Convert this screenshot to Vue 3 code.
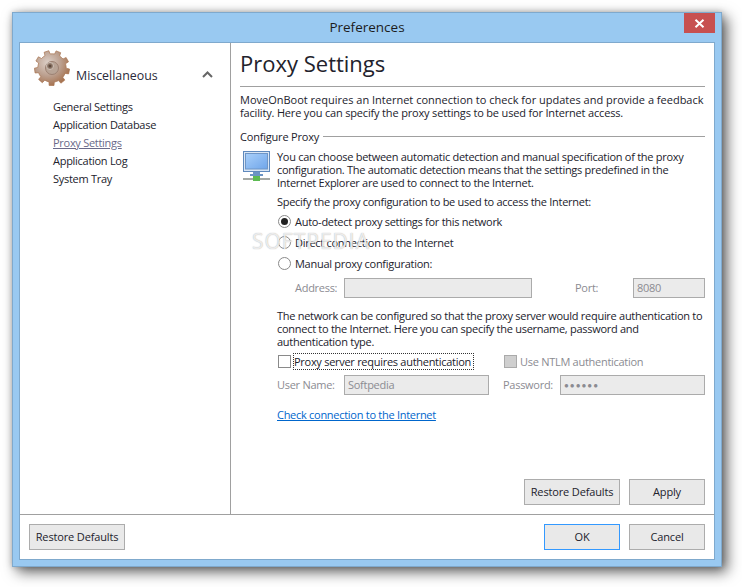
<script setup>
const nav = [
  { label: 'General Settings' },
  { label: 'Application Database' },
  { label: 'Proxy Settings', active: true },
  { label: 'Application Log' },
  { label: 'System Tray' }
]
const radios = [
  { label: 'Auto-detect proxy settings for this network', on: true },
  { label: 'Direct connection to the Internet' },
  { label: 'Manual proxy configuration:' }
]
function gearPath() {
  const cx = 18, cy = 19, teeth = 9
  const pts = []
  for (let i = 0; i < teeth; i++) {
    const a = (i / teeth) * Math.PI * 2 + 0.2
    const s = (Math.PI * 2) / teeth
    const list = [[14.2, -0.5], [14.2, -0.27], [17.6, -0.2], [17.6, 0.2], [14.2, 0.27], [14.2, 0.5]]
    for (const [r, f] of list) {
      const t = a + f * s
      pts.push((cx + r * Math.cos(t)).toFixed(1) + ' ' + (cy + r * Math.sin(t)).toFixed(1))
    }
  }
  return 'M' + pts.join('L') + 'Z'
}
const gear = gearPath()
</script>

<template>
  <div class="page">
    <div class="window">
      <header class="titlebar">
        <span class="title">Preferences</span>
        <button class="close" aria-label="Close">
          <svg width="11" height="9" viewBox="0 0 11 9"><path d="M1.500 .8 9.500 8.200M9.500 .8 1.500 8.200" stroke="#fff" stroke-width="2" fill="none"/></svg>
        </button>
      </header>
      <div class="client">
        <div class="main">
          <aside class="side">
            <div class="side-head">
              <svg class="gear" width="36" height="38" viewBox="0 0 36 38">
                <defs>
                  <radialGradient id="gearFill" cx="38%" cy="35%" r="75%">
                    <stop offset="0" stop-color="#ddd0c8"/>
                    <stop offset=".5" stop-color="#bb9f8e"/>
                    <stop offset="1" stop-color="#a0663f"/>
                  </radialGradient>
                </defs>
                <path :d="gear" fill="url(#gearFill)" stroke="#a8734f" stroke-width=".7"/>
                <circle cx="18" cy="19" r="6.500" fill="#b8a496" stroke="#9c8172"/>
                <circle cx="16" cy="17" r="3.500" fill="#8e7768" stroke="#cfc2b9"/>
                <circle cx="16" cy="17" r="1.500" fill="#5d4a3e"/>
              </svg>
              <span class="side-title">Miscellaneous</span>
              <svg class="chev" width="11" height="7" viewBox="0 0 11 7"><path d="M1 6 5.500 1.500 10 6" fill="none" stroke="#666" stroke-width="2"/></svg>
            </div>
            <ul class="nav">
              <li v-for="n in nav" :key="n.label" :class="{ active: n.active }">{{ n.label }}</li>
            </ul>
          </aside>
          <section class="pane">
            <h1 class="heading">Proxy Settings</h1>
            <p class="intro">MoveOnBoot requires an Internet connection to check for updates and provide a feedback facility. Here you can specify the proxy settings to be used for Internet access.</p>
            <div class="group-title"><span>Configure Proxy</span><i></i></div>
            <div class="group">
              <svg class="monitor" width="28" height="32" viewBox="0 0 28 32">
                <defs>
                  <linearGradient id="scr" x1="0" y1="0" x2="1" y2="1">
                    <stop offset="0" stop-color="#a9d0fa"/>
                    <stop offset="1" stop-color="#6fa5ea"/>
                  </linearGradient>
                </defs>
                <rect x=".5" y=".5" width="26" height="20" fill="#d9e6f5" stroke="#5f89bd"/>
                <rect x="2.500" y="2.500" width="22" height="15.500" fill="url(#scr)" stroke="#6f96c6"/>
                <path d="M10 21h7v2h3v2H7v-2h3z" fill="#6b94c4"/>
                <rect x="0" y="27" width="27" height="2" fill="#a5a9a5"/>
                <path d="M10 25h7v5H10z" fill="#5dbb52"/>
              </svg>
              <div class="group-body">
                <p class="para-a">You can choose between automatic detection and manual specification of the proxy configuration. The automatic detection means that the settings predefined in the Internet Explorer are used to connect to the Internet.</p>
                <p class="specify">Specify the proxy configuration to be used to access the Internet:</p>
                <div class="radios">
                  <label v-for="r in radios" :key="r.label" class="radio">
                    <span class="dot" :class="{ on: r.on }"></span>{{ r.label }}
                  </label>
                </div>
                <div class="addr">
                  <span class="lab">Address:</span>
                  <span class="field"></span>
                  <span class="lab port-lab">Port:</span>
                  <span class="field">8080</span>
                </div>
                <p class="para-b">The network can be configured so that the proxy server would require authentication to connect to the Internet. Here you can specify the username, password and authentication type.</p>
                <div class="checks">
                  <span class="box"></span>
                  <span class="focus">Proxy server requires authentication</span>
                  <span class="box disabled"></span>
                  <span class="lab">Use NTLM authentication</span>
                </div>
                <div class="creds">
                  <span class="lab">User Name:</span>
                  <span class="field">Softpedia</span>
                  <span class="lab pw-lab">Password:</span>
                  <span class="field dots">●●●●●●</span>
                </div>
                <a class="link">Check connection to the Internet</a>
              </div>
            </div>
            <div class="pane-actions">
              <button class="btn wide">Restore Defaults</button>
              <button class="btn">Apply</button>
            </div>
            <div class="watermark">SOFTPEDIA</div>
          </section>
        </div>
        <footer class="footer">
          <button class="btn wide">Restore Defaults</button>
          <span class="spacer"></span>
          <button class="btn primary">OK</button>
          <button class="btn">Cancel</button>
        </footer>
      </div>
    </div>
  </div>
</template>

<style>
html, body { background: #fff; margin: 0; }
</style>

<style scoped>
* { box-sizing: border-box; }
.page { width: 742px; height: 587px; padding: 12px 0 0 12px; overflow: hidden; }
.window {
  width: 710px; height: 555px;
  background: #99c9f1; border: 1px solid #7fa9cd;
  box-shadow: 5px 5px 13px rgba(0,0,0,.62), 0 0 6px rgba(0,0,0,.22);
  display: flex; flex-direction: column;
  padding: 0 6px 6px;
  font: 11px/13px "Open Sans", sans-serif; color: #22222c;
  letter-spacing: -0.28px;
}
.titlebar { height: 29px; flex: none; display: flex; align-items: center; justify-content: center; position: relative; }
.title { font-size: 13.500px; color: #1c1c1c; line-height: 29px; letter-spacing: 0; }
.close {
  position: absolute; right: 0; top: 0; width: 31px; height: 20px; padding: 0;
  border: 0; background: #c75050; display: flex; align-items: center; justify-content: center;
}
.client { flex: 1; background: #fff; border: 1px solid #7fa9cd; display: flex; flex-direction: column; min-height: 0; }
.main { flex: 1; display: flex; min-height: 0; }
.side { width: 211px; flex: none; border-right: 1px solid #a0a0a0; padding: 6px 0 0 14px; }
.side-head { display: flex; align-items: center; height: 38px; }
.gear { flex: none; }
.side-title { font-size: 12.400px; margin-left: 6px; color: #2a2a3a; position: relative; top: 7px; letter-spacing: 0; }
.chev { margin-left: 44px; position: relative; top: 6px; }
.nav { list-style: none; margin: 11px 0 0 19px; padding: 0; }
.nav li { height: 18px; line-height: 18px; }
.nav .active { color: #6a6a8a; text-decoration: underline; }
.pane { flex: 1; padding: 0 9px; display: flex; flex-direction: column; position: relative; min-width: 0; }
.heading { margin: 0; font-weight: 400; font-size: 22px; line-height: 32px; height: 44px; padding-top: 4px; border-bottom: 1px solid #a0a0a0; color: #22222c; flex: none; letter-spacing: 0; }
.intro { margin: 6px 0 0; letter-spacing: -0.17px; }
.intro::first-line { letter-spacing: 0; }
.group-title { display: flex; align-items: center; gap: 4px; margin-top: 10px; height: 14px; letter-spacing: -0.2px; }
.group-title i { flex: 1; border-top: 1px solid #a0a0a0; }
.group { display: flex; margin-top: 7px; }
.monitor { flex: none; margin: 1px 6px 0 3px; }
.group-body { flex: 1; min-width: 0; }
p { margin: 0; }
.specify { margin-top: 6px; }
.radios { margin-top: 3px; }
.radio { display: flex; align-items: center; height: 21px; }
.dot { width: 13px; height: 13px; border-radius: 50%; border: 1px solid #8a8a8a; background: #fff; margin: 0 4px 0 1px; flex: none; display: flex; align-items: center; justify-content: center; }
.dot.on::after { content: ""; width: 7px; height: 7px; border-radius: 50%; background: #222; }
.addr { display: flex; align-items: center; margin-top: 4px; height: 20px; }
.addr .lab { width: 67px; padding-left: 18px; flex: none; position: relative; top: -1px; }
.addr .field:nth-child(2) { width: 188px; flex: none; }
.addr .port-lab { width: 101px; padding-left: 43px; }
.addr .field:nth-child(4) { width: 72px; flex: none; }
.lab { color: #8b8b92; }
.field { height: 20px; border: 1px solid #ababab; background: #ebebeb; color: #8b8b92; padding: 0 3px; line-height: 17px; display: block; }
.para-b { margin-top: 11px; }
.checks { display: flex; align-items: center; margin-top: 4px; height: 18px; }
.box { width: 13px; height: 13px; border: 1px solid #8a8a8a; background: #fff; margin-left: 1px; flex: none; }
.box.disabled { background: #cfcfcf; border-color: #aaa; margin-left: 31px; margin-right: 3px; }
.focus { margin-left: 3px; outline: 1px dotted #333; width: 179px; line-height: 15px; white-space: nowrap; }
.creds { display: flex; align-items: center; height: 20px; margin-top: 5px; }
.creds .lab { width: 67px; flex: none; position: relative; top: -1px; }
.creds .field { width: 145px; flex: none; }
.creds .pw-lab { width: 71px; padding-left: 14px; }
.dots { font-size: 8px; letter-spacing: 1px; line-height: 18px; }
.link { display: inline-block; margin-top: 13px; color: #0066cc; text-decoration: underline; }
.pane-actions { margin-top: auto; display: flex; justify-content: flex-end; gap: 9px; padding-bottom: 9px; }
.btn { width: 76px; height: 26px; padding: 0 0 2px; border: 1px solid #acacac; background: #e9e9e9; font: inherit; letter-spacing: -0.15px; color: #22222c; }
.btn.wide { width: 96px; }
.btn.primary { border-color: #3399ff; }
.footer { flex: none; height: 45px; border-top: 1px solid #a0a0a0; display: flex; align-items: center; gap: 9px; padding: 0 9px; }
.spacer { flex: 1; }
.watermark { position: absolute; left: 21px; top: 183px; font-size: 21px; line-height: 30px; letter-spacing: 1px; color: rgba(255,255,255,.75); text-shadow: 0 0 1px rgba(130,130,130,.7); pointer-events: none; }
</style>
